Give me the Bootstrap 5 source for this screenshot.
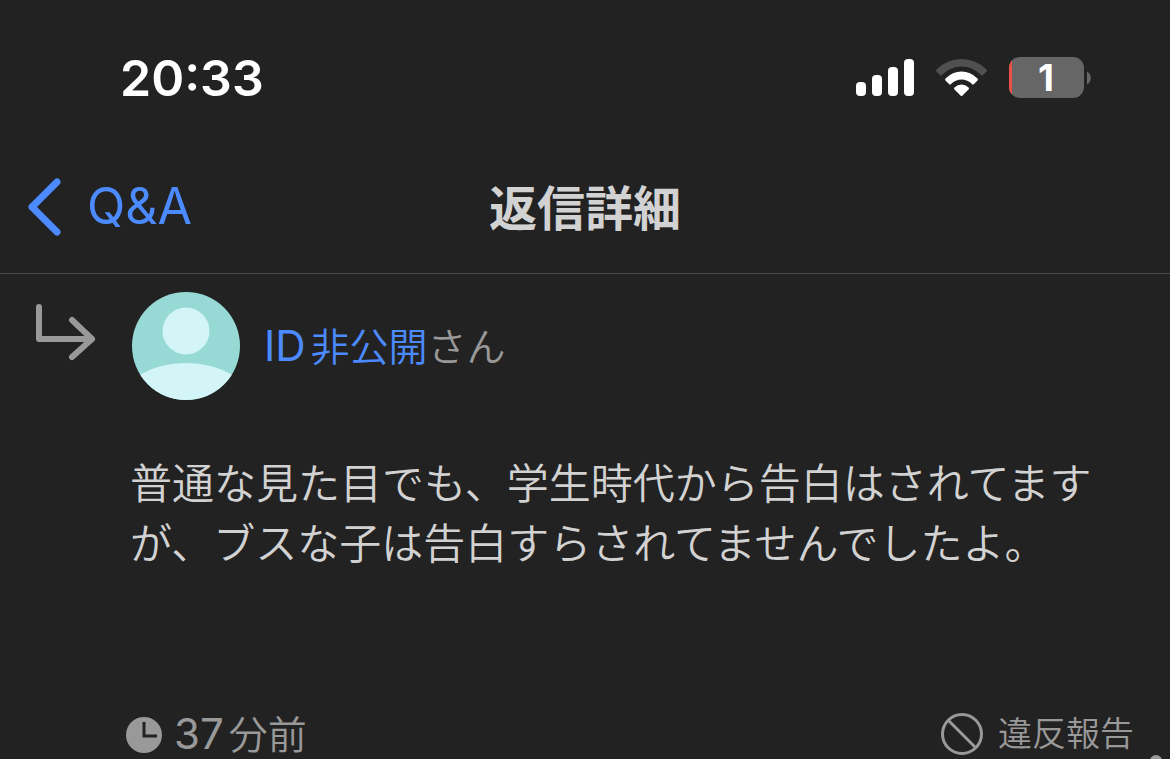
<!DOCTYPE html>
<html lang="ja">
<head>
<meta charset="utf-8">
<meta name="viewport" content="width=device-width, initial-scale=1">
<title>返信詳細</title>
<link href="https://cdn.jsdelivr.net/npm/bootstrap@5.3.0/dist/css/bootstrap.min.css" rel="stylesheet">
<style>
  body { background: #222; color: #d2d2d2; font-family: Inter, "Noto Sans CJK JP", sans-serif; }
  svg { display: block; flex: none; }
  a { color: #4b8bff; text-decoration: none; }
  .status-bar { height: 144px; padding: 12px 77px 0 120px; color: #fff; }
  .clock-time { font-size: 50px; line-height: 60px; font-weight: 600; }
  .top-nav { height: 130px; border-bottom: 1px solid #4a4a4a; padding: 0 28px; }
  .side { flex: 1 1 0; }
  .back-link { font-size: 50px; line-height: 60px; gap: 25px; }
  .page-title { font-size: 48px; line-height: 60px; font-weight: 700; }
  .reply { padding: 18px 36px 0; }
  .reply-mark { width: 96px; padding-top: 12px; }
  .user-name { font-size: 39px; line-height: 60px; font-weight: 350; color: #999; margin-left: 24px; }
  .latin { font-size: 42px; font-weight: 400; margin-right: 5px; }
  .reply-text { font-size: 42px; line-height: 60px; font-weight: 350; margin: 54px 0 0 94px; }
  .reply-foot { height: 53px; margin-top: 132px; padding: 0 36px 0 126px; overflow: hidden; color: #999; }
  .posted { font-size: 39px; line-height: 56px; font-weight: 350; gap: 12px; }
  .report { border: 0; background: none; padding: 0; color: #999; font-size: 34px; line-height: 56px; font-weight: 350; gap: 14px; }
  .more-dot { position: absolute; right: 8px; bottom: -8px; width: 12px; height: 12px; border-radius: 50%; background: #999; }
</style>
</head>
<body>
<header>
  <div class="status-bar d-flex align-items-center justify-content-between">
    <time class="clock-time">20:33</time>
    <div class="d-flex align-items-center">
      <svg width="60" height="40" viewBox="0 0 60 40" fill="#fff" role="img" aria-label="Signal">
        <rect x="1" y="24" width="10" height="14" rx="4"/><rect x="17" y="17" width="10" height="21" rx="4"/>
        <rect x="33" y="9" width="10" height="29" rx="4"/><rect x="49" y="1" width="10" height="37" rx="4"/>
      </svg>
      <svg class="ms-3 me-3" width="62" height="40" viewBox="0 0 62 40" role="img" aria-label="Wi-Fi">
        <path fill="#505050" d="M5.500 11.500Q16 1 30.500 1T55.500 11.500Q56.500 12.500 55.500 13.500L52 17Q51 18 50 17Q42 8.500 30.500 8.500T11 17Q10 18 9 17L5.500 13.500Q4.500 12.500 5.500 11.500Z"/>
        <path fill="#fff" d="M14.500 20.500Q21.500 13.500 30.500 13.500T46.500 20.500Q47.500 21.500 46.500 22.500L43 26Q42 27 41 26Q36.500 21.500 30.500 21.500T20 26Q19 27 18 26L14.500 22.500Q13.500 21.500 14.500 20.500Z"/>
        <path fill="#fff" d="M23.500 29.500Q26.500 26.500 30.500 26.500T37.500 29.500Q38.500 30.500 37.500 31.500L31.500 37.500Q30.500 38.500 29.500 37.500L23.500 31.500Q22.500 30.500 23.500 29.500Z"/>
      </svg>
      <svg width="84" height="52" viewBox="0 -5 84 52" role="img" aria-label="Battery 1%">
        <defs><clipPath id="cell"><rect x="0" y="0" width="75" height="41" rx="11"/></clipPath></defs>
        <g clip-path="url(#cell)"><rect width="75" height="41" fill="#666"/><rect width="3" height="41" fill="#ec5045"/></g>
        <path fill="#666" d="M78 14.500C83 17 83 25 78 27.500Z"/>
        <text x="37" y="34" text-anchor="middle" font-size="37" font-weight="700" fill="#fff">1</text>
      </svg>
    </div>
  </div>
  <nav class="top-nav d-flex align-items-center" aria-label="ナビゲーション">
    <div class="side">
      <a href="#" class="back-link d-inline-flex align-items-center">
        <svg width="34" height="60" viewBox="0 0 34 60" fill="none" stroke="#4b8bff" stroke-width="7" stroke-linecap="round" stroke-linejoin="round"><path d="M29 6 4 31 29 56"/></svg>
        <span>Q&amp;A</span>
      </a>
    </div>
    <h1 class="page-title m-0">返信詳細</h1>
    <div class="side"></div>
  </nav>
</header>
<main>
  <article>
    <div class="reply">
      <div class="d-flex align-items-start">
        <div class="reply-mark">
          <svg width="60" height="58" viewBox="0 0 60 58" fill="none" stroke="#999" stroke-width="6" stroke-linecap="round" stroke-linejoin="round"><path d="M3 3V35H56M36 16 56 35 36 53"/></svg>
        </div>
        <div class="d-flex align-items-center">
          <svg width="108" height="108" viewBox="0 0 108 108" role="img" aria-label="プロフィール画像">
            <defs><clipPath id="disc"><circle cx="54" cy="54" r="54"/></clipPath></defs>
            <g clip-path="url(#disc)"><rect width="108" height="108" fill="#97d9d5"/><circle cx="54" cy="39" r="23.500" fill="#d3f5f7"/><ellipse cx="54" cy="113" rx="66" ry="42" fill="#d3f5f7"/></g>
          </svg>
          <div class="user-name"><a href="#"><span class="latin">ID</span>非公開</a>さん</div>
        </div>
      </div>
      <p class="reply-text">普通な見た目でも、学生時代から告白はされてますが、ブスな子は告白すらされてませんでしたよ。</p>
    </div>
    <footer class="reply-foot position-relative d-flex align-items-start justify-content-between">
      <div class="posted d-flex align-items-center">
        <svg width="36" height="36" viewBox="0 0 36 36"><circle cx="18" cy="18" r="18" fill="#999"/><path d="M18 5V19H31" fill="none" stroke="#222" stroke-width="3"/></svg>
        <time><span class="latin">37</span>分前</time>
      </div>
      <button type="button" class="report d-flex align-items-center">
        <svg width="44" height="44" viewBox="0 0 44 44" fill="none" stroke="#999" stroke-width="3"><circle cx="22" cy="22" r="19.500"/><path d="M8 8 36 36"/></svg>
        <span>違反報告</span>
      </button>
      <span class="more-dot"></span>
    </footer>
  </article>
</main>
<script src="https://cdn.jsdelivr.net/npm/bootstrap@5.3.0/dist/js/bootstrap.bundle.min.js"></script>
</body>
</html>
